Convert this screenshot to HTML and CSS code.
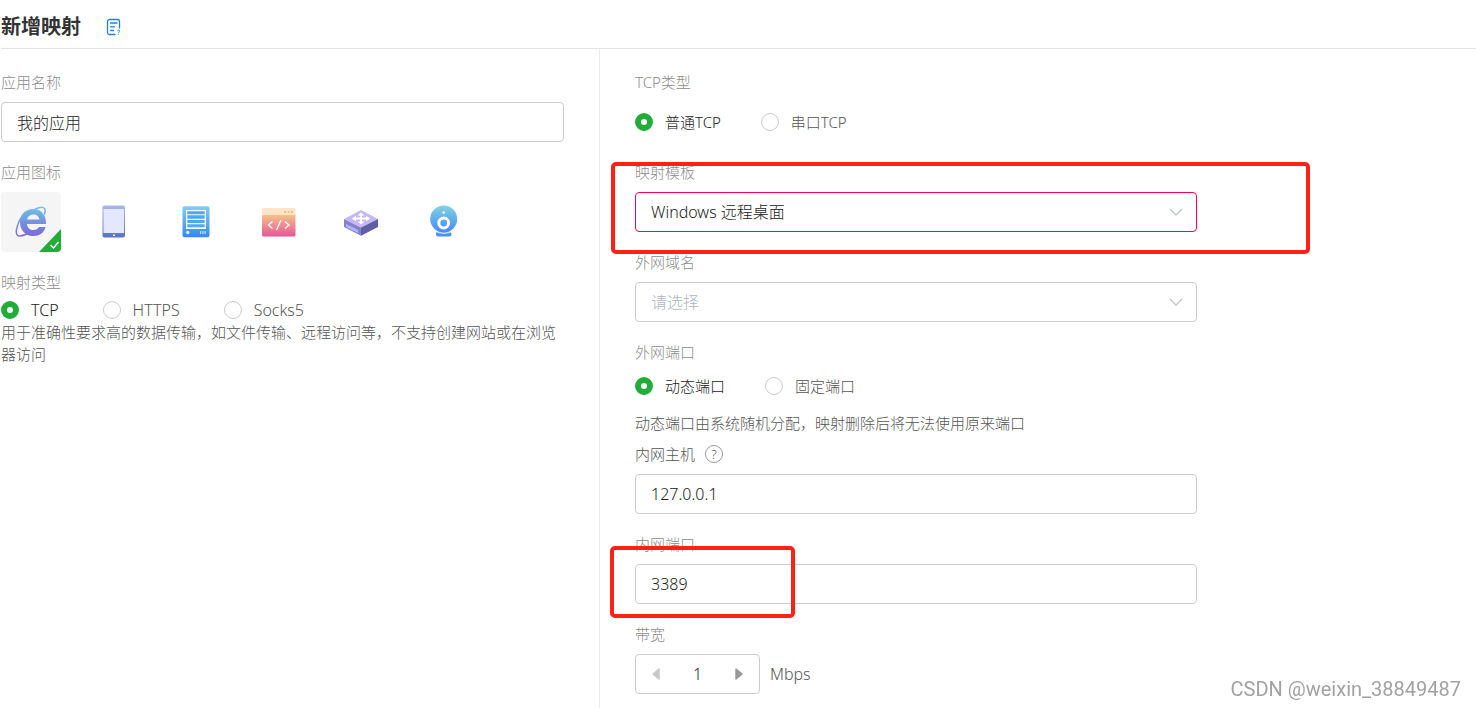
FILE: index.html
```html
<!DOCTYPE html>
<html lang="zh-CN">
<head>
<meta charset="utf-8">
<meta name="viewport" content="width=device-width, initial-scale=1">
<title>新增映射</title>
<link rel="stylesheet" href="styles.css">
</head>
<body>
<header class="page-head">
  <h1 class="page-title">新增映射</h1>
  <a class="doc-link" href="#" aria-label="帮助文档">
    <svg width="16" height="18" viewBox="0 0 16 18" fill="none" stroke="#1f80ea" stroke-width="1.300" stroke-linecap="round">
      <path d="M10 16.500H4.200A2 2 0 0 1 2.500 14.500V3.500A2 2 0 0 1 4.500 1.500H12.500A2 2 0 0 1 14.500 3.500V10"/>
      <path d="M5.500 5H12M5.500 8.800H9.500M5.500 12.500H8.500"/>
      <path d="M12.500 12.800Q12.700 11.800 13.900 12T14.100 13.800L13.500 15M13.300 16.500V16.600" stroke-width="0.900"/>
    </svg>
  </a>
</header>
<main class="columns">
  <section class="col col-left">
    <div class="field">
      <label class="label" for="app-name">应用名称</label>
      <input class="input" id="app-name" type="text" value="我的应用">
    </div>
    <div class="field">
      <span class="label">应用图标</span>
      <div class="icons">
        <button class="icon-tile selected" type="button" aria-pressed="true" aria-label="浏览器">
          <svg class="icon" viewBox="0 0 60 60">
            <defs><linearGradient id="g-ie" gradientUnits="userSpaceOnUse" x1="0" y1="15" x2="0" y2="45"><stop offset="0" stop-color="#6cc3e8"/><stop offset="1" stop-color="#7a64da"/></linearGradient></defs>
            <path fill="url(#g-ie)" fill-rule="evenodd" d="M45 32H26C26.500 36 29 38 32 38C35 38 36.800 37 38 35H44.600C43 41 38.500 44 32 44C24.500 44 19 38 19 30.500C19 23 24.500 17 32 17C40 17 45.500 23 45 32ZM26 27.500H38.500C38 24.500 36 22.500 32.200 22.500C29 22.500 26.700 24.500 26 27.500Z"/>
            <path fill="none" stroke="url(#g-ie)" stroke-width="1.500" stroke-linecap="round" d="M43.500 22C46 14.500 41 14 34 17.200M24 20.500C16.500 29 13.500 41 16.500 43.300C18.500 44.800 22.500 43.500 26.500 41.500"/>
            <path fill="#22ac38" d="M60 37V56A4 4 0 0 1 56 60H38Z"/>
            <path fill="none" stroke="#fff" stroke-width="1.500" d="M49.500 53L52.500 56L57.500 50"/>
          </svg>
        </button>
        <button class="icon-tile" type="button" aria-pressed="false" aria-label="手机">
          <svg class="icon" viewBox="0 0 60 60">
            <defs><linearGradient id="g-ph" x1="0" y1="0" x2="0" y2="1"><stop offset="0" stop-color="#a9b5ef"/><stop offset="1" stop-color="#5a72c4"/></linearGradient></defs>
            <rect x="18.500" y="13.500" width="22.500" height="32" rx="2" fill="url(#g-ph)"/>
            <rect x="19.500" y="17" width="20.500" height="24" fill="#e3e8ff"/>
            <rect x="29" y="42.500" width="2" height="1.500" rx=".5" fill="#fff"/>
          </svg>
        </button>
        <button class="icon-tile" type="button" aria-pressed="false" aria-label="服务器">
          <svg class="icon" viewBox="0 0 60 60">
            <defs><linearGradient id="g-sv" x1="0" y1="0" x2="0" y2="1"><stop offset="0" stop-color="#82cdf5"/><stop offset="1" stop-color="#3788f0"/></linearGradient></defs>
            <rect x="16.500" y="14.300" width="27" height="31" rx="2" fill="url(#g-sv)"/>
            <rect x="20" y="18" width="20" height="19" fill="#f4faff"/>
            <path fill="#4fa8f0" d="M21.300 19.300h17.400v3h-17.400zM21.300 23.300h17.400v3.500h-17.400zM21.300 28h17.400v3h-17.400zM21.300 32.300h17.400v3h-17.400z"/>
            <circle cx="21.800" cy="40.500" r="1.700" fill="#d9eeff"/>
            <path stroke="#d9eeff" d="M34.700 39v3M36.900 39v3M39.100 39v3"/>
          </svg>
        </button>
        <button class="icon-tile" type="button" aria-pressed="false" aria-label="代码">
          <svg class="icon" viewBox="0 0 60 60">
            <defs><linearGradient id="g-cd" x1="0" y1="0" x2="0" y2="1"><stop offset="0" stop-color="#f5c686"/><stop offset="1" stop-color="#e6559a"/></linearGradient></defs>
            <path fill="url(#g-cd)" d="M13 22H46.500V43A1.500 1.500 0 0 1 45 44.500H14.500A1.500 1.500 0 0 1 13 43Z"/>
            <path fill="#fee5c7" d="M14.500 16H45A1.500 1.500 0 0 1 46.500 17.500V23H13V17.500A1.500 1.500 0 0 1 14.500 16Z"/>
            <path fill="#f2bd8c" d="M35 19h2v2h-2zM38.500 19h2v2h-2zM42 19h2v2h-2z"/>
            <path fill="none" stroke="#fff" stroke-width="1.300" d="M23.500 29.500L19.500 33L23.500 36.500M36 29.500L40 33L36 36.500M32 28L27.500 38"/>
          </svg>
        </button>
        <button class="icon-tile" type="button" aria-pressed="false" aria-label="交换机">
          <svg class="icon" viewBox="0 0 60 60">
            <path fill="#c7b7f4" d="M30 18L47 27L30 35.500L13 27Z"/>
            <path fill="#8482cf" d="M13 27L30 35.500V43.700L13 35Z"/>
            <path fill="#5f5fa6" d="M47 27L30 35.500V43.700L47 35Z"/>
            <path fill="#b3b6f2" d="M15 32L27 38V41L15 35Z"/>
            <path fill="none" stroke="#fff" stroke-width="2" d="M22.500 26.500H37.500M30 22V31"/>
            <path fill="#fff" d="M30 20.500L33.500 23.500H26.500ZM30 32.500L26.500 29.500H33.500ZM21 26.500L25 23.800V29.200ZM39 26.500L35 23.800V29.200Z"/>
          </svg>
        </button>
        <button class="icon-tile" type="button" aria-pressed="false" aria-label="摄像头">
          <svg class="icon" viewBox="0 0 60 60">
            <defs><linearGradient id="g-cam" x1="0" y1="0" x2="0" y2="1"><stop offset="0" stop-color="#82d3df"/><stop offset="1" stop-color="#438bf6"/></linearGradient></defs>
            <rect x="22" y="39.500" width="15.400" height="5" rx="2" fill="#4c90f8"/>
            <circle cx="29.700" cy="27" r="13.500" fill="url(#g-cam)"/>
            <path fill="none" stroke="#fff" stroke-width="1" d="M21 39Q29.700 43.500 39 39"/>
            <circle cx="29.700" cy="31" r="4.900" fill="none" stroke="#fff" stroke-width="3"/>
            <circle cx="29.700" cy="20.500" r="1.300" fill="#fff"/>
          </svg>
        </button>
      </div>
    </div>
    <div class="type-field">
      <span class="label" id="map-type">映射类型</span>
      <div class="radios" role="radiogroup" aria-labelledby="map-type">
        <label class="radio"><input type="radio" name="map" checked><span>TCP</span></label>
        <label class="radio"><input type="radio" name="map"><span>HTTPS</span></label>
        <label class="radio"><input type="radio" name="map"><span>Socks5</span></label>
      </div>
      <p class="hint">用于准确性要求高的数据传输，如文件传输、远程访问等，不支持创建网站或在浏览器访问</p>
    </div>
  </section>
  <section class="col col-right">
    <div class="field">
      <span class="label" id="tcp-type">TCP类型</span>
      <div class="radios tall" role="radiogroup" aria-labelledby="tcp-type">
        <label class="radio"><input type="radio" name="tcp" checked><span>普通TCP</span></label>
        <label class="radio"><input type="radio" name="tcp"><span>串口TCP</span></label>
      </div>
    </div>
    <div class="field">
      <label class="label" for="template">映射模板</label>
      <div class="select-wrap">
        <select class="input active" id="template"><option>Windows 远程桌面</option></select>
        <svg class="chevron" width="14" height="8" viewBox="0 0 14 8"><path d="M1 1L7 7L13 1" fill="none" stroke="#c0c4cc" stroke-width="1.300"/></svg>
      </div>
      <span class="mark mark-template"></span>
    </div>
    <div class="field">
      <label class="label" for="domain">外网域名</label>
      <div class="select-wrap">
        <select class="input empty" id="domain"><option>请选择</option></select>
        <svg class="chevron" width="14" height="8" viewBox="0 0 14 8"><path d="M1 1L7 7L13 1" fill="none" stroke="#c0c4cc" stroke-width="1.300"/></svg>
      </div>
    </div>
    <div class="port-field">
      <span class="label" id="port-type">外网端口</span>
      <div class="radios mid" role="radiogroup" aria-labelledby="port-type">
        <label class="radio"><input type="radio" name="port" checked><span>动态端口</span></label>
        <label class="radio"><input type="radio" name="port"><span>固定端口</span></label>
      </div>
      <p class="hint">动态端口由系统随机分配，映射删除后将无法使用原来端口</p>
    </div>
    <div class="field">
      <div class="label-row">
        <label class="label dark" for="host">内网主机</label>
        <button class="help" type="button" aria-label="说明">?</button>
      </div>
      <input class="input" id="host" type="text" value="127.0.0.1">
    </div>
    <div class="field">
      <label class="label" for="inner-port">内网端口</label>
      <input class="input" id="inner-port" type="text" value="3389">
      <span class="mark mark-port"></span>
    </div>
    <div class="field">
      <label class="label" for="bandwidth">带宽</label>
      <div class="bandwidth">
        <div class="stepper">
          <button class="step" type="button" aria-label="减少" disabled><svg width="8" height="12" viewBox="0 0 8 12"><path d="M7 1V11L1 6Z" fill="#c8c8c8" stroke="#c8c8c8" stroke-width="1.500" stroke-linejoin="round"/></svg></button>
          <input class="step-value" id="bandwidth" type="text" value="1">
          <button class="step" type="button" aria-label="增加"><svg width="8" height="12" viewBox="0 0 8 12"><path d="M1 1V11L7 6Z" fill="#999" stroke="#999" stroke-width="1.500" stroke-linejoin="round"/></svg></button>
        </div>
        <span class="unit">Mbps</span>
      </div>
    </div>
  </section>
</main>
<div class="watermark">CSDN @weixin_38849487</div>
</body>
</html>
```
FILE: styles.css
```css
* { box-sizing: border-box; }

body {
  margin: 0;
  min-height: 100vh;
  display: flex;
  flex-direction: column;
  padding-left: 1px;
  background: #fff;
  color: #555;
  font-family: "Noto Sans", "Noto Sans CJK SC", sans-serif;
  font-size: 15px;
  font-weight: 300;
  line-height: 20px;
}

button, input, select {
  font: inherit;
  color: inherit;
  margin: 0;
}

.page-head {
  display: flex;
  align-items: center;
  gap: 24px;
  height: 49px;
  padding-top: 6px;
  border-bottom: 1px solid #e4e4e4;
}

.page-title {
  margin: 0;
  color: #333;
  font-size: 20px;
  font-weight: 700;
  line-height: 28px;
}

.doc-link { display: flex; }

.columns {
  flex: 1;
  display: grid;
  grid-template-columns: minmax(0, 599px) minmax(0, 1fr);
}

.col {
  display: flex;
  flex-direction: column;
  gap: 20px;
  padding-top: 23px;
}

.col-left {
  padding-right: 35px;
  border-right: 1px solid #ebebeb;
}

.col-right { padding: 23px 35px 14px; }
.col-right > * { width: 100%; max-width: 562px; }

.field {
  position: relative;
  display: flex;
  flex-direction: column;
  gap: 10px;
}

.label { color: #8c8c8c; }
.label.dark { color: #555; }

.label-row {
  display: flex;
  align-items: center;
  gap: 10px;
  height: 20px;
}

.input {
  width: 100%;
  height: 40px;
  padding: 0 15px;
  border: 1px solid #ccc;
  border-radius: 4px;
  background: #fff;
  color: #222;
  font-size: 16px;
  outline: none;
  appearance: none;
}

.input.active { border-color: #f5054f; }
.input.empty { color: #b0b4be; }

.select-wrap { position: relative; }

.chevron {
  position: absolute;
  right: 14px;
  top: 16px;
  pointer-events: none;
}

.icons {
  display: flex;
  justify-content: space-between;
  max-width: 473px;
}

.icon-tile {
  width: 60px;
  height: 60px;
  padding: 0;
  border: 0;
  border-radius: 4px;
  background: none;
}

.icon-tile.selected { background: #f5f5f5; }

.icon {
  display: block;
  width: 60px;
  height: 60px;
}

.radios {
  display: flex;
  align-items: center;
  gap: 40px;
}

.radios.mid { height: 28px; }
.radios.tall { height: 40px; }

.radio {
  display: flex;
  align-items: center;
  gap: 12px;
}

.radio input {
  width: 18px;
  height: 18px;
  border: 1px solid #ccc;
  border-radius: 50%;
  background: #fff;
  appearance: none;
}

.radio input:checked {
  border: 6px solid #22ac38;
}

.radio input:checked + span { color: #222; }

.type-field {
  display: flex;
  flex-direction: column;
}

.type-field .radios {
  gap: 44px;
  margin-top: 8px;
  padding-bottom: 1px;
  font-size: 16px;
}

.port-field {
  display: flex;
  flex-direction: column;
  gap: 10px;
  margin-bottom: -10px;
}

.port-field .hint { padding-top: 2px; }

.hint {
  margin: 0;
  line-height: 22px;
}

.help {
  width: 18px;
  height: 18px;
  padding: 0;
  border: 1px solid #999;
  border-radius: 50%;
  background: none;
  font-size: 13px;
  line-height: 16px;
}

.bandwidth {
  display: flex;
  align-items: center;
  gap: 10px;
}

.unit { font-size: 16px; }

.stepper {
  display: flex;
  width: 125px;
  height: 40px;
  border: 1px solid #ccc;
  border-radius: 4px;
}

.step {
  display: flex;
  flex: 0 0 40px;
  align-items: center;
  justify-content: center;
  padding: 0;
  border: 0;
  background: none;
}

.step-value {
  flex: 1;
  min-width: 0;
  padding: 0;
  border: 0;
  background: none;
  color: #222;
  font-size: 16px;
  text-align: center;
}

.mark {
  position: absolute;
  border: 4px solid #ff2214;
  border-radius: 5px;
  pointer-events: none;
}

.mark-template {
  left: -24px;
  top: 0;
  width: 699px;
  height: 92px;
}

.mark-port {
  left: -25px;
  top: 12px;
  width: 185px;
  height: 72px;
}

.watermark {
  position: fixed;
  right: 15px;
  bottom: 8px;
  color: #a2a2a2;
  font-family: Roboto, "Liberation Sans", sans-serif;
  font-size: 20px;
  font-weight: 400;
  line-height: 22px;
}
```
